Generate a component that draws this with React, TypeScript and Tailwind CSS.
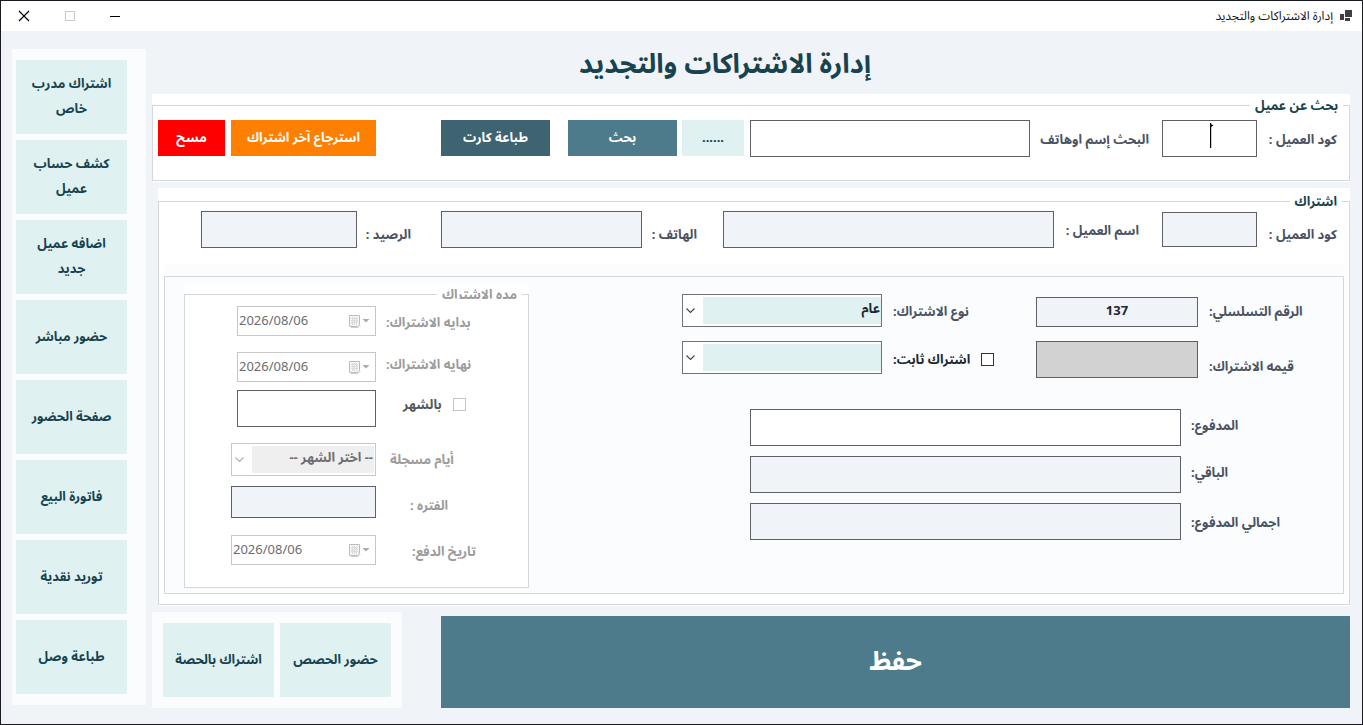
import { useId } from 'react';
import type { ReactNode } from 'react';

const sideActions = [
  'اشتراك مدرب خاص',
  'كشف حساب عميل',
  'اضافه عميل جديد',
  'حضور مباشر',
  'صفحة الحضور',
  'فاتورة البيع',
  'توريد نقدية',
  'طباعة وصل',
];

function TitleBar() {
  return (
    <header className="flex h-[30px] shrink-0 items-center justify-between bg-white pr-[10px] pl-[17px]">
      <div className="flex items-center gap-[7px]">
        <svg width="12" height="12" viewBox="0 0 12 12" fill="#3f3f42" aria-hidden="true">
          <path d="M5 0h7v7H5zM0 4h4v6H0zM5 8h5v3H5z" />
        </svg>
        <span className="text-xs text-[#111111]">إدارة الاشتراكات والتجديد</span>
      </div>
      <div className="flex items-center gap-[35px]">
        <button type="button" aria-label="تصغير">
          <svg width="10" height="12" viewBox="0 0 10 12">
            <path d="M0 6.5h10" stroke="#000" fill="none" />
          </svg>
        </button>
        <button type="button" aria-label="تكبير" disabled>
          <svg width="10" height="12" viewBox="0 0 10 12">
            <path d="M.5 1.500h9v9h-9z" stroke="#c8c8c8" fill="none" />
          </svg>
        </button>
        <button type="button" aria-label="إغلاق">
          <svg width="12" height="12" viewBox="0 0 12 12">
            <path d="M1 1l10 10M11 1L1 11" stroke="#000" strokeWidth="1.200" fill="none" />
          </svg>
        </button>
      </div>
    </header>
  );
}

function Tile({ children }: { children: ReactNode }) {
  return (
    <button type="button" className="h-[74px] w-[111px] bg-[#dff2f1] px-2 pb-[2px] text-[13px] leading-[25px] font-bold text-[#17424f]">
      {children}
    </button>
  );
}

type FieldProps = {
  label: string;
  labelClass: string;
  inputClass: string;
  value?: string;
  readOnly?: boolean;
  children?: ReactNode;
};

function Field({ label, labelClass, inputClass, value = '', readOnly, children }: FieldProps) {
  const id = useId();
  return (
    <>
      <label htmlFor={id} className={`shrink-0 text-[13px] leading-6 font-bold whitespace-nowrap text-[#4a5261] ${labelClass}`}>
        {label}
      </label>
      {children ?? null}
      <input
        id={id}
        type="text"
        defaultValue={value}
        readOnly={readOnly}
        className={`min-w-0 border border-[#5f6166] outline-none ${inputClass}`}
      />
    </>
  );
}

function Chevron({ color }: { color: string }) {
  return (
    <svg className="mr-[4px] ml-[2px] shrink-0" width="9" height="6" viewBox="0 0 9 6" aria-hidden="true">
      <path d="M.5.5l4 4 4-4" fill="none" stroke={color} strokeWidth="1.100" />
    </svg>
  );
}

function Combo({ id, label, option, disabled }: { id: string; label?: string; option: string; disabled?: boolean }) {
  return (
    <div
      className={`flex h-[33px] items-center border bg-white py-[2px] pl-[1px] ${
        disabled ? 'w-[145px] border-[#c9c9c9] pr-[1px]' : 'w-[200px] border-[#707276]'
      }`}
    >
      <select
        id={id}
        aria-label={label}
        disabled={disabled}
        className={`ml-[4px] h-full min-w-0 flex-1 appearance-none pr-[1px] pb-[3px] text-[13px] font-bold opacity-100 outline-none ${
          disabled ? 'bg-[#efefef] text-[#6d6d6d]' : 'bg-[#dff2f1] text-[#1c2733]'
        }`}
      >
        <option>{option}</option>
      </select>
      <Chevron color={disabled ? '#b0b0b0' : '#444'} />
    </div>
  );
}

function DateBox({ id, wide }: { id: string; wide?: boolean }) {
  return (
    <div dir="ltr" className={`flex h-[30px] items-center border border-[#c6c6c6] bg-white pr-[5px] pl-[1px] ${wide ? 'w-[145px]' : 'w-[139px]'}`}>
      <input id={id} type="text" disabled defaultValue="2026/08/06" className="min-w-0 flex-1 text-[13px] text-[#6d6d6d]" />
      <svg width="21" height="13" viewBox="0 0 21 13" aria-hidden="true">
        <path d="M.5.5h10v9l-2 2h-8z" fill="#f6f6f6" stroke="#bdbdbd" />
        <path d="M2 3.500h7M2 5.500h7M2 7.500h7M3.500 2v8M5.500 2v8M7.500 2v8" stroke="#dcdcdc" />
        <path d="M2 12.500h7l2.500-2.500" fill="none" stroke="#cfcfcf" />
        <path d="M13.500 4h7L17 7.500z" fill="#ababab" />
      </svg>
    </div>
  );
}

function PeriodRow({ id, label, labelClass, className, children }: { id: string; label: string; labelClass: string; className?: string; children: ReactNode }) {
  return (
    <div className={`flex items-center ${className ?? ''}`}>
      <label htmlFor={id} className={`w-[152px] shrink-0 text-end text-[13px] font-bold text-[#9b9b9b] ${labelClass}`}>
        {label}
      </label>
      {children}
    </div>
  );
}

function PeriodGroup() {
  return (
    <div className="w-[345px] shrink-0 self-start bg-white pt-[5px]">
      <fieldset className="h-[299px] border border-[#d5d8db]">
        <legend className="mr-[6px] h-[10px] overflow-hidden px-[5px] text-[13px] leading-[10px] font-bold text-[#9b9b9b]">
          مده الاشتراك
        </legend>
        <div className="flex flex-col pt-[7px]">
          <PeriodRow id="start" label="بدايه الاشتراك:" labelClass="pt-1 pl-[10px]">
            <DateBox id="start" />
          </PeriodRow>
          <PeriodRow id="end" label="نهايه الاشتراك:" labelClass="pb-1 pl-[10px]" className="mt-4">
            <DateBox id="end" />
          </PeriodRow>
          <div className="mt-2 flex items-center">
            <label className="flex w-[152px] shrink-0 items-center justify-end gap-[11px] pb-2 pl-[27px] text-[13px] font-bold text-[#55565a]">
              <input type="checkbox" disabled className="size-[13px] appearance-none border border-[#c6c6c6] bg-white" />
              بالشهر
            </label>
            <input type="text" aria-label="عدد الشهور" className="h-[37px] w-[139px] border border-[#5f6166] bg-white" />
          </div>
          <PeriodRow id="days" label="أيام مسجلة" labelClass="pl-[14px]" className="mt-4">
            <Combo id="days" option="-- اختر الشهر --" disabled />
          </PeriodRow>
          <PeriodRow id="slot" label="الفتره :" labelClass="pt-2 pl-[34px]" className="mt-[10px]">
            <input id="slot" type="text" readOnly className="h-[32px] w-[145px] border border-[#5f6166] bg-[#f0f3f8]" />
          </PeriodRow>
          <PeriodRow id="paid-on" label="تاريخ الدفع:" labelClass="pt-1 pl-[36px]" className="mt-[17px]">
            <DateBox id="paid-on" wide />
          </PeriodRow>
        </div>
      </fieldset>
    </div>
  );
}

function SearchGroup() {
  return (
    <div className="bg-white pt-[7px] pb-[1px]">
      <fieldset className="border border-[#d5d8db]">
        <legend className="mr-[6px] h-2 px-[5px] text-[13px] leading-2 font-bold text-[#17424f]">بحث عن عميل</legend>
        <div className="flex h-[71px] items-start pt-[11px] pr-[12px] pl-[5px]">
          <div className="flex min-w-0 flex-1 items-center">
            <Field label="كود العميل :" labelClass="w-[80px]" inputClass="h-[37px] w-[95px] shrink-0 bg-white text-center">
              <span className="relative self-start">
                <svg className="absolute top-[3px] right-[43px]" width="4" height="25" viewBox="0 0 4 25" aria-hidden="true">
                  <path d="M0 0h1.200v25H0zM1 1l2.500 1.500L1 4z" fill="#000" />
                </svg>
              </span>
            </Field>
            <Field label="البحث إسم اوهاتف" labelClass="w-[132px] pr-[13px]" inputClass="h-[37px] flex-1 bg-white px-2" />
          </div>
          <div className="flex shrink-0 items-center pr-[6px] text-[13px] font-bold text-white">
            <button type="button" className="h-[36px] w-[62px] bg-[#dff2f1] text-[#17424f]">......</button>
            <button type="button" className="mr-[5px] h-[36px] w-[109px] bg-[#4e7b8b]">بحث</button>
            <button type="button" className="mr-[18px] h-[36px] w-[109px] bg-[#3e6371]">طباعة كارت</button>
            <button type="button" className="mr-[65px] h-[36px] w-[145px] bg-[#ff8000]">استرجاع آخر اشتراك</button>
            <button type="button" className="mr-[6px] h-[36px] w-[67px] bg-[#ff0000]">مسح</button>
          </div>
        </div>
      </fieldset>
    </div>
  );
}

function DetailsPanel() {
  return (
    <div className="bg-[#fafcfd] pt-2">
      <fieldset className="border border-[#d5d8db]">
        <legend className="h-2 leading-2" aria-label="تفاصيل الاشتراك" />
        <div className="flex h-[313px] items-start">
          <div className="flex min-w-0 flex-1 flex-col pt-[14px]">
            <div className="flex items-end">
              <Field
                label="الرقم التسلسلي:"
                labelClass="mb-1 w-[145px] pl-[11px] text-end"
                inputClass="h-[30px] w-[162px] bg-[#f0f3f8] pb-1 text-center text-[13px] font-bold text-[#1c2733]"
                value="137"
                readOnly
              />
              <label htmlFor="kind" className="mb-1 w-[154px] shrink-0 pl-[11px] text-end text-[13px] leading-6 font-bold text-[#4a5261]">
                نوع الاشتراك:
              </label>
              <Combo id="kind" option="عام" />
            </div>
            <div className="mt-[14px] flex items-start">
              <Field
                label="قيمه الاشتراك:"
                labelClass="w-[145px] self-end pl-[11px] text-end"
                inputClass="h-[37px] w-[162px] bg-[#d2d2d2]"
                readOnly
              />
              <label className="flex h-[37px] w-[154px] shrink-0 items-center justify-end gap-[11px] pl-[11px] text-[13px] font-bold text-[#1c2733]">
                <input type="checkbox" className="size-[13px] appearance-none border border-[#333] bg-white" />
                اشتراك ثابت:
              </label>
              <Combo id="fixed" label="الاشتراك الثابت" option="" />
            </div>
            <div className="mt-[31px] flex flex-col gap-[10px]">
              <div className="flex items-center">
                <Field label="المدفوع:" labelClass="w-[162px] pb-[6px] pl-[10px] text-end" inputClass="h-[37px] w-[431px] bg-white" />
              </div>
              <div className="flex items-center">
                <Field label="الباقي:" labelClass="w-[162px] pb-[6px] pl-[10px] text-end" inputClass="h-[37px] w-[431px] bg-[#f0f3f8]" readOnly />
              </div>
              <div className="flex items-center">
                <Field label="اجمالي المدفوع:" labelClass="w-[162px] pl-[10px] text-end" inputClass="h-[37px] w-[431px] bg-[#f0f3f8]" readOnly />
              </div>
            </div>
          </div>
          <div className="pt-[4px] pl-[19px]">
            <PeriodGroup />
          </div>
        </div>
      </fieldset>
    </div>
  );
}

function SubscriptionGroup() {
  return (
    <div className="mt-[6px] ml-[6px] bg-white pt-[9px] pb-[1px]">
      <fieldset className="border border-[#d5d8db] px-[5px] pb-[10px]">
        <legend className="mr-[2px] h-2 px-[5px] text-[13px] leading-2 font-bold text-[#17424f]">اشتراك</legend>
        <div className="flex h-[59px] items-center pr-[7px] pb-[10px] pl-[37px]">
          <Field label="كود العميل :" labelClass="w-[80px] pt-2" inputClass="h-[35px] w-[95px] shrink-0 bg-[#f0f3f8]" readOnly />
          <Field label="اسم العميل :" labelClass="w-[108px] pr-[23px]" inputClass="h-[37px] flex-1 bg-[#f0f3f8]" readOnly />
          <Field label="الهاتف :" labelClass="w-[81px] pt-2 pr-[26px]" inputClass="h-[37px] w-[201px] bg-[#f0f3f8]" readOnly />
          <Field label="الرصيد :" labelClass="w-[84px] pt-2 pr-[30px]" inputClass="h-[37px] w-[156px] bg-[#f0f3f8]" readOnly />
        </div>
        <DetailsPanel />
      </fieldset>
    </div>
  );
}

export default function App() {
  return (
    <div
      dir="rtl"
      className="flex min-h-screen flex-col border border-[#1a1a22] bg-[#f0f3f8] font-['Noto_Sans','Noto_Sans_Arabic','Segoe_UI',sans-serif]"
    >
      <TitleBar />
      <div className="flex flex-1 items-start gap-[6px] pr-[12px] pl-[11px]">
        <main className="min-w-0 flex-1">
          <h1 className="h-[63px] pt-[4px] pr-[52px] text-center text-[27px] leading-[56px] font-bold text-[#17424f]">
            إدارة الاشتراكات والتجديد
          </h1>
          <SearchGroup />
          <SubscriptionGroup />
          <div className="mt-[6px] flex items-end gap-[39px]">
            <button type="button" className="h-[92px] flex-1 bg-[#4e7b8b] pb-1 text-[26px] font-bold text-white">
              حفظ
            </button>
            <div className="flex shrink-0 gap-[6px] bg-[#fafcfd] p-[11px]">
              <Tile>حضور الحصص</Tile>
              <Tile>اشتراك بالحصة</Tile>
            </div>
          </div>
        </main>
        <aside className="mt-[18px] flex w-[134px] shrink-0 flex-col items-end gap-[6px] bg-[#fafcfd] py-[11px] pl-1">
          {sideActions.map((name) => (
            <Tile key={name}>{name}</Tile>
          ))}
        </aside>
      </div>
    </div>
  );
}
